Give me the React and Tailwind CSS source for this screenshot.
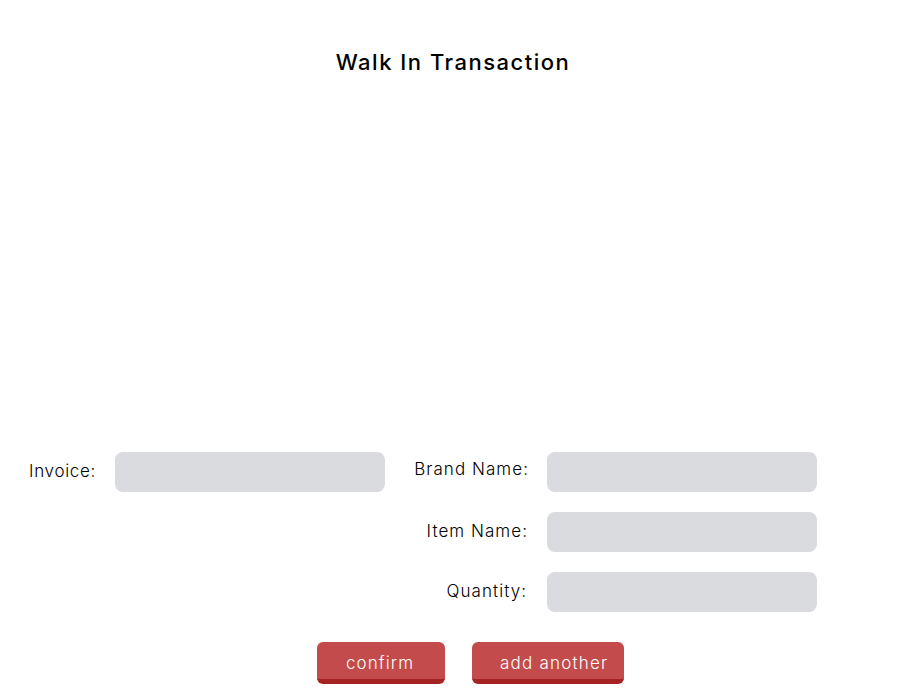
export default function App() {
  const font = { fontFamily: '"Inter", "Liberation Sans", sans-serif' };
  return (
    <div className="w-[900px] h-[700px] bg-white text-black" style={font}>
      <h1 className="pt-[48px] text-center text-[22px] leading-[28px] font-medium tracking-[1.5px] pl-[6px]">
        Walk In Transaction
      </h1>
      <div className="mt-[376px] flex">
        <div className="flex items-center h-10">
          <div className="w-[115px] pl-[29px] text-[17px] font-light tracking-[0.7px]">Invoice:</div>
          <div className="w-[270px] h-10 rounded-lg bg-[#dadbde]"></div>
        </div>
        <div className="grid grid-cols-[143px_270px] gap-x-[19px] gap-y-5 items-center">
          <div className="text-right text-[17px] font-light tracking-[1.05px] -mt-1 -mr-[1px]">Brand Name:</div>
          <div className="h-10 rounded-lg bg-[#dadbde]"></div>
          <div className="text-right text-[17px] font-light tracking-[1.05px]">Item Name:</div>
          <div className="h-10 rounded-lg bg-[#dadbde]"></div>
          <div className="text-right text-[17px] font-light tracking-[1.05px] pr-[1px] -mt-[1px]">Quantity:</div>
          <div className="h-10 rounded-lg bg-[#dadbde]"></div>
        </div>
      </div>
      <div className="mt-[30px] ml-[317px] flex gap-[27px]">
        <button className="w-[128px] h-[42px] rounded-md bg-[#c44b4b] border-b-[5px] border-[#a52323] text-white text-[17px] font-light tracking-[1.1px] pt-[6px] pr-[2px]">
          confirm
        </button>
        <button className="w-[152px] h-[42px] rounded-md bg-[#c44b4b] border-b-[5px] border-[#a52323] text-white text-[17px] font-light tracking-[1.2px] pt-[6px] pl-[28px] text-left">
          add another
        </button>
      </div>
    </div>
  );
}
